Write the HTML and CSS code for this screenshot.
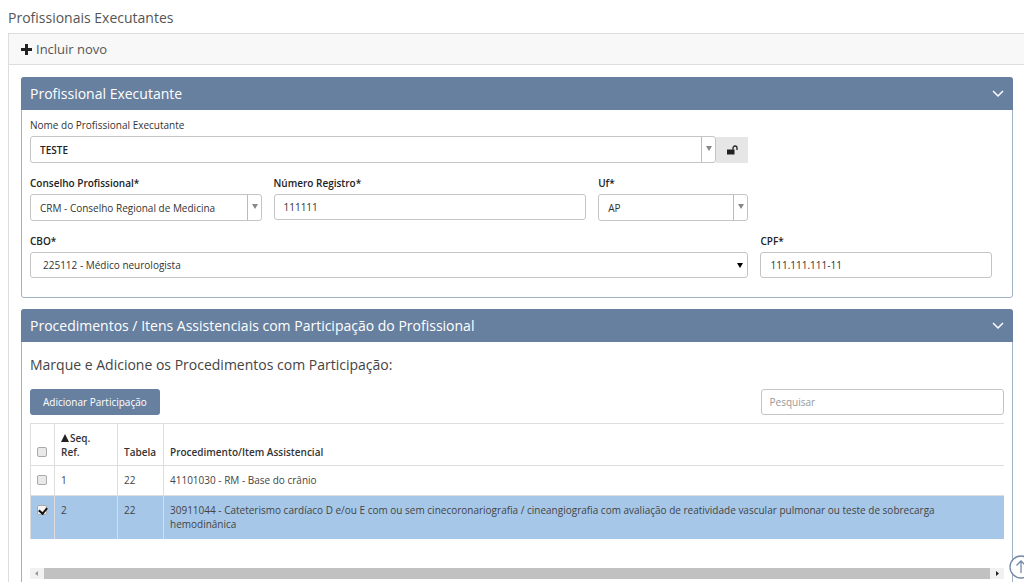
FILE: index.html
```html
<!DOCTYPE html>
<html lang="pt-BR">
<head>
<meta charset="utf-8">
<title>Profissionais Executantes</title>
<link rel="stylesheet" href="styles.css">
</head>
<body>
<h1 class="page-title">Profissionais Executantes</h1>
<main class="box">
  <div class="toolbar">
    <button class="add-new" type="button">
      <svg width="11" height="11" viewBox="0 0 11 11" aria-hidden="true"><path d="M4 0h3v4h4v3H7v4H4V7H0V4h4z" fill="#222"/></svg>
      Incluir novo
    </button>
  </div>

  <section class="panel">
    <header class="panel-head">
      <h2>Profissional Executante</h2>
      <button class="collapse" type="button" aria-label="Recolher"><svg width="12" height="8" viewBox="0 0 12 8"><path d="M1 1l5 5 5-5" fill="none" stroke="#fff" stroke-width="1.5"/></svg></button>
    </header>
    <form class="form">
      <div class="field span-9">
        <label for="nome">Nome do Profissional Executante</label>
        <div class="group">
          <div class="combo combo-name">
            <select id="nome" class="control strong"><option>TESTE</option></select>
            <span class="combo-arrow"></span>
          </div>
          <button class="lock" type="button" aria-label="Desbloquear"><svg width="11" height="10" viewBox="0 0 11 10"><path d="M0 4.5h7.5V9.500H0z" fill="#222"/><path d="M6 4.800V3a2 2 0 0 1 4 0v2" fill="none" stroke="#222" stroke-width="1.300"/></svg></button>
        </div>
      </div>
      <div class="field span-3 row-start">
        <label class="required" for="conselho">Conselho Profissional*</label>
        <div class="combo">
          <select id="conselho" class="control"><option>CRM - Conselho Regional de Medicina</option></select>
          <span class="combo-arrow"></span>
        </div>
      </div>
      <div class="field span-4">
        <label class="required" for="registro">Número Registro*</label>
        <input id="registro" class="control text" type="text" value="111111">
      </div>
      <div class="field span-2">
        <label class="required" for="uf">Uf*</label>
        <div class="combo">
          <select id="uf" class="control"><option>AP</option></select>
          <span class="combo-arrow"></span>
        </div>
      </div>
      <div class="field span-9 row-start">
        <label class="required" for="cbo">CBO*</label>
        <div class="combo combo-plain">
          <select id="cbo" class="control text"><option>225112 - Médico neurologista</option></select>
          <span class="combo-arrow"></span>
        </div>
      </div>
      <div class="field span-3">
        <label class="required" for="cpf">CPF*</label>
        <input id="cpf" class="control text" type="text" value="111.111.111-11">
      </div>
    </form>
  </section>

  <section class="panel">
    <header class="panel-head">
      <h2>Procedimentos / Itens Assistenciais com Participação do Profissional</h2>
      <button class="collapse" type="button" aria-label="Recolher"><svg width="12" height="8" viewBox="0 0 12 8"><path d="M1 1l5 5 5-5" fill="none" stroke="#fff" stroke-width="1.5"/></svg></button>
    </header>
    <div class="list">
      <h3 class="hint">Marque e Adicione os Procedimentos com Participação:</h3>
      <div class="actions">
        <button class="primary" type="button">Adicionar Participação</button>
        <input class="control search" type="search" placeholder="Pesquisar" aria-label="Pesquisar">
      </div>
      <table class="table">
        <thead>
          <tr>
            <th class="col-check"><input type="checkbox" aria-label="Selecionar todos"></th>
            <th class="col-seq"><svg class="sort" width="8" height="8" viewBox="0 0 8 8" aria-hidden="true"><path d="M4 0l4 8H0z" fill="#222"/></svg>Seq. Ref.</th>
            <th class="col-tab">Tabela</th>
            <th>Procedimento/Item Assistencial</th>
          </tr>
        </thead>
        <tbody>
          <tr>
            <td class="col-check"><input type="checkbox" aria-label="Selecionar 1"></td>
            <td>1</td><td>22</td><td>41101030 - RM - Base do crânio</td>
          </tr>
          <tr class="selected">
            <td class="col-check"><input type="checkbox" checked aria-label="Selecionar 2"></td>
            <td>2</td><td>22</td><td class="item">30911044 - Cateterismo cardíaco D e/ou E com ou sem cinecoronariografia / cineangiografia com avaliação de reatividade vascular pulmonar ou teste de sobrecarga hemodinânica</td>
          </tr>
        </tbody>
      </table>
      <div class="scrollbar" aria-hidden="true">
        <svg width="14" height="11" viewBox="0 0 14 11"><path d="M8 3v5L5 5.500z" fill="#999"/></svg>
        <span class="thumb"></span>
        <svg width="14" height="11" viewBox="0 0 14 11"><path d="M6 3v5l3-2.500z" fill="#222"/></svg>
      </div>
    </div>
  </section>
</main>
<a class="to-top" href="#" aria-label="Voltar ao topo"><svg width="24" height="24" viewBox="0 0 24 24"><circle cx="12" cy="12" r="11" fill="#fff" stroke="#7388a5" stroke-width="1.300"/><path d="M12 18V6M7.500 10.500L12 6l4.500 4.500" fill="none" stroke="#7388a5" stroke-width="1.300"/></svg></a>
</body>
</html>
```
FILE: styles.css
```css
* { box-sizing: border-box; }
html { height: 100%; }
body {
  display: flex;
  flex-direction: column;
  height: 100%;
  margin: 0;
  padding: 8px 0 0 8px;
  overflow: hidden;
  background: #fff;
  color: #444;
  font: 10px/14px "Open Sans", sans-serif;
}
h1, h2, h3 { margin: 0; font-weight: 400; }
button, input, select { font: inherit; color: inherit; }
button { border: 0; padding: 0; background: none; }
.page-title { font-size: 14px; line-height: 20px; margin-bottom: 5px; color: #555; }
.box { flex: 1; min-height: 0; border: 1px solid #ddd; border-width: 1px 0 0 1px; overflow: hidden; }
.toolbar { display: flex; padding: 0 12px; background: #f8f8f8; border-bottom: 1px solid #ddd; }
.add-new { display: flex; align-items: center; gap: 4px; font-size: 13px; line-height: 30px; color: #555; }

.panel { margin: 12px 11px 0 12px; border: 1px solid #a3b1c4; border-radius: 3px; }
.panel + .panel { margin-top: 11px; padding-bottom: 12px; }
.panel-head {
  display: flex;
  align-items: center;
  justify-content: space-between;
  margin: -1px -1px 0;
  padding: 0 9px;
  border-radius: 3px 3px 0 0;
  background: #67809f;
  color: #fff;
}
.panel-head h2 { font-size: 14px; line-height: 33px; }
.collapse { display: flex; }

.form {
  display: grid;
  grid-template-columns: repeat(12, minmax(0, 1fr));
  gap: 12px;
  padding: 7px 20px 19px 8px;
}
.span-2 { grid-column-end: span 2; }
.span-3 { grid-column-end: span 3; }
.span-4 { grid-column-end: span 4; }
.span-9 { grid-column-end: span 9; }
.row-start { grid-column-start: 1; }
.field label { display: block; line-height: 16px; margin-bottom: 3px; color: #333; }
.field .required { color: #222; font-weight: 600; }
.control {
  display: block;
  width: 100%;
  height: 27px;
  padding: 0 9px;
  border: 1px solid #c4c4c4;
  border-radius: 3px;
  background: #fff;
  color: #333;
  appearance: none;
  outline: 0;
}
.control.text { height: 26px; }
.strong { font-weight: 600; color: #222; }
.group { display: flex; align-items: center; }
.combo { position: relative; }
.combo-name { flex: 1; }
.combo-arrow {
  position: absolute;
  top: 1px;
  right: 1px;
  bottom: 1px;
  width: 14px;
  border-left: 1px solid #bbb;
  pointer-events: none;
}
.combo-arrow::after {
  content: "";
  position: absolute;
  top: 9px;
  left: 4px;
  border: 3px solid transparent;
  border-top: 5px solid #888;
  border-bottom: 0;
}
.combo-plain .control { padding-left: 12px; }
.combo-plain .combo-arrow { border: 0; }
.combo-plain .combo-arrow::after { border-top-color: #000; top: 10px; }
.lock { display: flex; align-items: center; justify-content: center; width: 32px; height: 26px; background: #e6e6e6; }

.list { padding: 13px 8px 0; }
.hint { font-size: 14px; line-height: 20px; color: #444; }
.actions { display: flex; justify-content: space-between; margin: 14px 0 8px; }
.primary { padding: 0 13px; line-height: 26px; border-radius: 3px; background: #67809f; color: #fff; }
.search { width: 25%; height: 26px; padding: 0 8px; }
.search::placeholder { color: #999; }

.table { width: 100%; border-collapse: collapse; table-layout: fixed; }
.table th, .table td {
  padding: 7px 6px 8px;
  border: 1px solid #ddd;
  border-right: 0;
  text-align: left;
  vertical-align: top;
}
.table th { vertical-align: bottom; padding-bottom: 6px; font-weight: 600; color: #333; }
.table .col-check { width: 24px; padding-right: 0; }
.table .col-seq { width: 63px; padding-right: 20px; }
.col-tab { width: 46px; }
.table .item { padding-right: 20px; }
.sort { margin-right: 1px; }
.selected td { background: #a6c7e8; border-bottom: 0; border-top-color: #a6c7e8; }
.table input {
  display: block;
  position: relative;
  appearance: none;
  width: 10px;
  height: 10px;
  margin: 2px 0;
  border: 1px solid #aaa;
  border-radius: 2px;
  background: #e9e9e9;
}
.table input:checked { background: #f4f4f4; }
.table input:checked::after {
  content: "";
  position: absolute;
  left: 2px;
  top: 0;
  width: 4px;
  height: 6px;
  border: solid #111;
  border-width: 0 2px 2px 0;
  transform: rotate(40deg);
}
.scrollbar { display: flex; margin-top: 29px; background: #f1f1f1; }
.thumb { flex: 1; background: #c1c1c1; }
.to-top { position: fixed; right: -9px; bottom: 3px; display: flex; }
```
